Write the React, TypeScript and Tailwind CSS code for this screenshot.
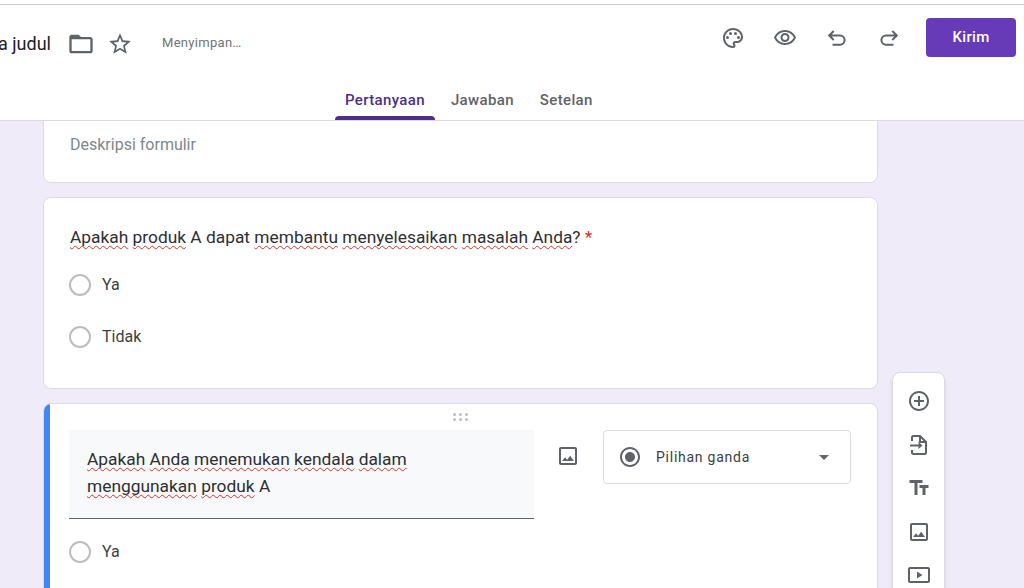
const Icon = ({ children, className = "w-6 h-6" }: { children: React.ReactNode; className?: string }) => (
  <svg viewBox="0 0 24 24" className={`${className} shrink-0 fill-current`}>
    {children}
  </svg>
);

const imagePath =
  "M19 5v14H5V5h14m0-2H5c-1.1 0-2 .9-2 2v14c0 1.1.9 2 2 2h14c1.1 0 2-.9 2-2V5c0-1.1-.9-2-2-2zm-4.86 8.86-3 3.87L9 13.14 6 17h12l-3.86-5.14z";

function Spell({ children }: { children: string }) {
  return <span className="underline decoration-wavy decoration-[#d93025] decoration-1 underline-offset-2 [text-decoration-skip-ink:none]">{children}</span>;
}

function Radio({ label }: { label: string }) {
  return (
    <div className="flex items-center">
      <div className="w-[22px] h-[22px] rounded-full border-2 border-[#bdbdbd] bg-white"></div>
      <span className="ml-[11px] text-[16px] leading-6 text-[#3c4043]">{label}</span>
    </div>
  );
}

function Tab({ label, active }: { label: string; active?: boolean }) {
  return (
    <div className={`relative h-full flex items-center px-[10px] text-[15px] font-medium tracking-[0.35px] ${active ? "text-[#4d2f8a]" : "text-[#5f6368]"}`}>
      {label}
      {active && <div className="absolute left-0 right-0 bottom-0 h-[4px] rounded-t bg-[#4d2f8a]"></div>}
    </div>
  );
}

export default function App() {
  return (
    <div className="w-[1024px] h-[588px] overflow-hidden bg-[#f0ebf8] flex flex-col font-['Roboto',sans-serif]">
      <header className="relative z-10 shrink-0 bg-white pt-[4px] border-b border-[#dadce0]">
        <div className="border-t border-[#c4c7c9] h-[77px] flex items-center pr-[8px] text-[#5f6368]">
          <div className="w-[51px] overflow-hidden flex justify-end shrink-0">
            <span className="whitespace-nowrap text-[18px] text-[#202124]">Formulir tanpa judul</span>
          </div>
          <Icon className="w-7 h-7 ml-[16px] mt-[2px]">
            <path d="M20 6h-8l-2-2H4c-1.1 0-2 .9-2 2v12c0 1.1.9 2 2 2h16c1.1 0 2-.9 2-2V8c0-1.1-.9-2-2-2zm0 12H4V8h16v10z" />
          </Icon>
          <Icon className="w-[26px] h-[26px] ml-[12px] mt-[2px]">
            <path d="m22 9.24-7.19-.62L12 2 9.19 8.63 2 9.24l5.46 4.73L5.82 21 12 17.27 18.18 21l-1.63-7.03L22 9.24zM12 15.4l-3.76 2.27 1-4.28-3.32-2.88 4.38-.38L12 6.1l1.71 4.04 4.38.38-3.32 2.88 1 4.28L12 15.4z" />
          </Icon>
          <span className="ml-[29px] text-[13px] tracking-[0.3px] text-[#6f7378]">Menyimpan…</span>
          <div className="ml-auto self-start mt-[13px] h-[39px] flex items-center gap-[28px]">
            <Icon>
              <path d="M12 22C6.49 22 2 17.51 2 12S6.49 2 12 2s10 4.04 10 9c0 3.31-2.69 6-6 6h-1.77c-.28 0-.5.22-.5.5 0 .12.05.23.13.33.41.47.64 1.06.64 1.67A2.5 2.5 0 0 1 12 22zm0-18c-4.41 0-8 3.59-8 8s3.59 8 8 8c.28 0 .5-.22.5-.5a.54.54 0 0 0-.14-.35c-.41-.46-.63-1.05-.63-1.65a2.5 2.5 0 0 1 2.5-2.5H16c2.21 0 4-1.79 4-4 0-3.86-3.59-7-8-7z" />
              <circle cx="6.5" cy="11.5" r="1.5" />
              <circle cx="9.5" cy="7.5" r="1.5" />
              <circle cx="14.5" cy="7.5" r="1.5" />
              <circle cx="17.5" cy="11.5" r="1.5" />
            </Icon>
            <Icon>
              <path d="M12 6c3.79 0 7.17 2.13 8.82 5.5C19.17 14.87 15.79 17 12 17s-7.17-2.13-8.82-5.5C4.83 8.13 8.21 6 12 6m0-2C7 4 2.73 7.11 1 11.5 2.73 15.89 7 19 12 19s9.27-3.11 11-7.5C21.27 7.11 17 4 12 4zm0 5c1.38 0 2.5 1.12 2.5 2.5S13.38 14 12 14s-2.5-1.12-2.5-2.5S10.62 9 12 9m0-2c-2.48 0-4.5 2.02-4.5 4.5S9.52 16 12 16s4.5-2.02 4.5-4.5S14.48 7 12 7z" />
            </Icon>
            <Icon>
              <path d="M8.7 5 4.2 9.5 8.7 14M4.8 9.5H15a4.6 4.6 0 0 1 0 9.2H7.5" fill="none" stroke="currentColor" strokeWidth="2" />
            </Icon>
            <Icon>
              <path d="m15.3 5 4.5 4.5-4.5 4.5M19.2 9.5H9a4.6 4.6 0 0 0 0 9.2h7.5" fill="none" stroke="currentColor" strokeWidth="2" />
            </Icon>
            <button className="w-[90px] h-[39px] -ml-[3px] rounded bg-[#673ab7] text-white text-[15px] font-medium tracking-[0.3px]">Kirim</button>
          </div>
        </div>
        <nav className="h-[39px] pl-[335px] flex gap-[6px]">
          <Tab label="Pertanyaan" active />
          <Tab label="Jawaban" />
          <Tab label="Setelan" />
        </nav>
      </header>

      <main className="flex-1 min-h-0 flex items-start">
        <div className="w-[835px] ml-[43px] shrink-0 flex flex-col gap-[14px] -mt-[19px]">
          <section className="h-[81px] rounded-lg border border-[#dadce0] bg-white pl-[26px] pt-[30px]">
            <p className="text-[16px] leading-6 text-[#80868b]">Deskripsi formulir</p>
          </section>

          <section className="h-[192px] rounded-lg border border-[#dadce0] bg-white pl-[25px] pt-[27px]">
            <p className="ml-px text-[17.35px] leading-6 text-[#2d2f33]">
              <Spell>Apakah</Spell> <Spell>produk</Spell> A dapat <Spell>membantu</Spell> <Spell>menyelesaikan</Spell> <Spell>masalah</Spell> <Spell>Anda</Spell>? <span className="text-[#d93025]">*</span>
            </p>
            <div className="mt-[24px] flex flex-col gap-[28px]">
              <Radio label="Ya" />
              <Radio label="Tidak" />
            </div>
          </section>

          <section className="relative h-[300px] rounded-lg border border-[#dadce0] bg-white overflow-hidden pl-[25px] pt-[26px]">
            <div className="absolute left-0 top-0 bottom-0 w-[6px] bg-[#4285f4]"></div>
            <div className="absolute left-[409px] top-[9px] grid grid-cols-3 gap-x-[3px] gap-y-[2px]">
              {[0, 1, 2, 3, 4, 5].map((i) => (
                <div key={i} className="w-[3px] h-[3px] rounded-full bg-[#bdc1c6]"></div>
              ))}
            </div>
            <div className="flex items-start">
              <div className="w-[465px] h-[89px] bg-[#f8f9fa] border-b border-[#5f6368] pl-[18px] pt-[16px] text-[17.35px] leading-[27px] text-[#2d2f33]">
                <Spell>Apakah</Spell> <Spell>Anda</Spell> <Spell>menemukan</Spell> <Spell>kendala</Spell> <Spell>dalam</Spell>
                <br />
                <Spell>menggunakan</Spell> <Spell>produk</Spell> A
              </div>
              <div className="ml-[22px] mt-[14px] text-[#5f6368]">
                <Icon>
                  <path d={imagePath} />
                </Icon>
              </div>
              <div className="ml-[23px] w-[248px] h-[54px] rounded border border-[#dadce0] flex items-center pl-[14px] pr-[14px] text-[#5f6368]">
                <Icon>
                  <path d="M12 7c-2.76 0-5 2.24-5 5s2.24 5 5 5 5-2.24 5-5-2.24-5-5-5zm0-5C6.48 2 2 6.48 2 12s4.48 10 10 10 10-4.48 10-10S17.52 2 12 2zm0 18c-4.42 0-8-3.58-8-8s3.58-8 8-8 8 3.58 8 8-3.58 8-8 8z" />
                </Icon>
                <span className="ml-[14px] text-[14px] tracking-[0.75px] text-[#3c4043]">Pilihan ganda</span>
                <Icon className="w-6 h-6 ml-auto">
                  <path d="m7 10 5 5 5-5z" />
                </Icon>
              </div>
            </div>
            <div className="mt-[21px]">
              <Radio label="Ya" />
            </div>
          </section>
        </div>

        <aside className="w-[53px] ml-[14px] mt-[251px] h-[260px] shrink-0 rounded-lg border border-[#dadce0] bg-white shadow-md flex flex-col items-center gap-[19.5px] pt-[16px] text-[#5f6368]">
          <Icon>
            <path d="M13 7h-2v4H7v2h4v4h2v-4h4v-2h-4V7zm-1-5C6.48 2 2 6.48 2 12s4.48 10 10 10 10-4.48 10-10S17.52 2 12 2zm0 18c-4.41 0-8-3.59-8-8s3.59-8 8-8 8 3.59 8 8-3.59 8-8 8z" />
          </Icon>
          <Icon>
            <path d="M5 8V4.5A1.5 1.5 0 0 1 6.5 3H13l6 6v10.5a1.5 1.5 0 0 1-1.5 1.5h-11A1.5 1.5 0 0 1 5 19.5V17" fill="none" stroke="currentColor" strokeWidth="2" />
            <path d="M13 3v6h6" fill="none" stroke="currentColor" strokeWidth="2" />
            <path d="M3 11.5h8.5V9l4 3.5-4 3.5v-2.5H3z" />
          </Icon>
          <Icon>
            <path d="M2.5 4v3h5v12h3V7h5V4h-13zm19 5h-9v3h3v7h3v-7h3V9z" />
          </Icon>
          <Icon>
            <path d={imagePath} />
          </Icon>
          <Icon>
            <path d="M21 4H3c-1.1 0-2 .9-2 2v12c0 1.1.9 2 2 2h18c1.1 0 2-.9 2-2V6c0-1.1-.9-2-2-2zm0 14H3V6h18v12zM10 8.5v7l5.5-3.5z" />
          </Icon>
        </aside>
      </main>
    </div>
  );
}
